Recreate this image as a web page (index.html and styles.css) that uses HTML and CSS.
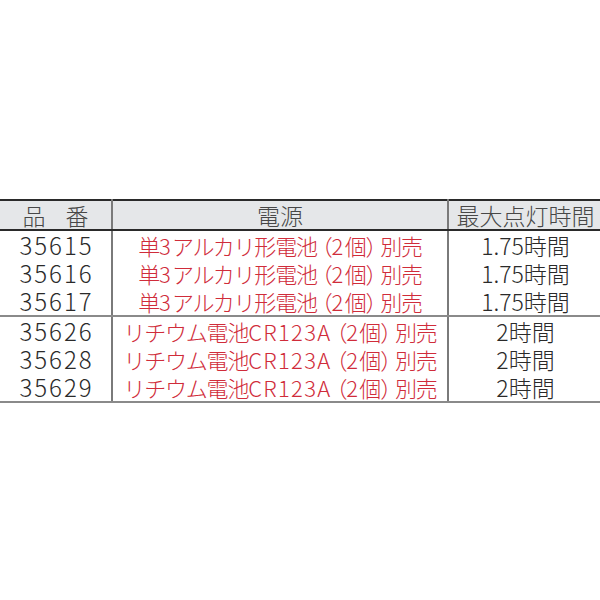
FILE: index.html
```html
<!DOCTYPE html>
<html lang="ja">
<head>
<meta charset="utf-8">
<link rel="stylesheet" href="styles.css">
</head>
<body>
<div class="page">
<table class="spec">
  <thead>
    <tr class="head">
      <th class="c1"><span class="hin">品</span><span class="ban">番</span></th>
      <th class="c2">電源</th>
      <th class="c3">最大点灯時間</th>
    </tr>
  </thead>
  <tbody>
    <tr><td class="c1">35615</td><td class="c2 red">単<span class="lat">3</span>アルカリ形電池<span class="pl">（</span><span class="lat">2</span>個<span class="pr">）</span>別売</td><td class="c3">1.75時間</td></tr>
    <tr><td class="c1">35616</td><td class="c2 red">単<span class="lat">3</span>アルカリ形電池<span class="pl">（</span><span class="lat">2</span>個<span class="pr">）</span>別売</td><td class="c3">1.75時間</td></tr>
    <tr class="grp-end"><td class="c1">35617</td><td class="c2 red">単<span class="lat">3</span>アルカリ形電池<span class="pl">（</span><span class="lat">2</span>個<span class="pr">）</span>別売</td><td class="c3">1.75時間</td></tr>
    <tr><td class="c1">35626</td><td class="c2 red">リチウム電池<span class="lat">CR123A</span><span class="pl">（</span><span class="lat">2</span>個<span class="pr">）</span>別売</td><td class="c3">2時間</td></tr>
    <tr><td class="c1">35628</td><td class="c2 red">リチウム電池<span class="lat">CR123A</span><span class="pl">（</span><span class="lat">2</span>個<span class="pr">）</span>別売</td><td class="c3">2時間</td></tr>
    <tr class="last"><td class="c1">35629</td><td class="c2 red">リチウム電池<span class="lat">CR123A</span><span class="pl">（</span><span class="lat">2</span>個<span class="pr">）</span>別売</td><td class="c3">2時間</td></tr>
  </tbody>
</table>
</div>
</body>
</html>
```
FILE: styles.css
```css
html, body {
  margin: 0;
  padding: 0;
  background: #ffffff;
}
.page {
  width: 600px;
  height: 600px;
  padding-top: 199px;
  box-sizing: border-box;
}
.spec {
  width: 600px;
  border-collapse: collapse;
  table-layout: fixed;
  font-family: "Noto Sans CJK JP", "Noto Sans", sans-serif;
  font-weight: 300;
  color: #2a2a2a;
  font-size: 23px;
}
.spec th, .spec td {
  padding: 0;
  text-align: center;
  white-space: nowrap;
  line-height: 26px;
  height: 28px;
}
.spec .c1 { width: 111px; border-right: 2px solid #7a7a7a; }
.spec .c2 { width: 334px; border-right: 2px solid #7a7a7a; }
.spec .c3 { width: 153px; }
.head th {
  background: #e5e7e9;
  color: #474747;
  font-weight: 300;
  border-top: 2px solid #2a2a2a;
  border-bottom: 2px solid #2a2a2a;
  height: 28px;
}
.hin { margin-right: 20px; }
.spec td.c1 {
  font-size: 24px;
  letter-spacing: 2px;
  text-indent: 2px;
}
.red {
  color: #d02c3a;
  font-size: 22px;
  letter-spacing: -1.2px;
}
.lat { letter-spacing: 1.3px; }
.pl { margin-left: -6px; }
.pr { margin-right: -6px; }
.grp-end td { border-bottom: 2px solid #8a8a8a; }
.last td { border-bottom: 2px solid #8a8a8a; }
```
